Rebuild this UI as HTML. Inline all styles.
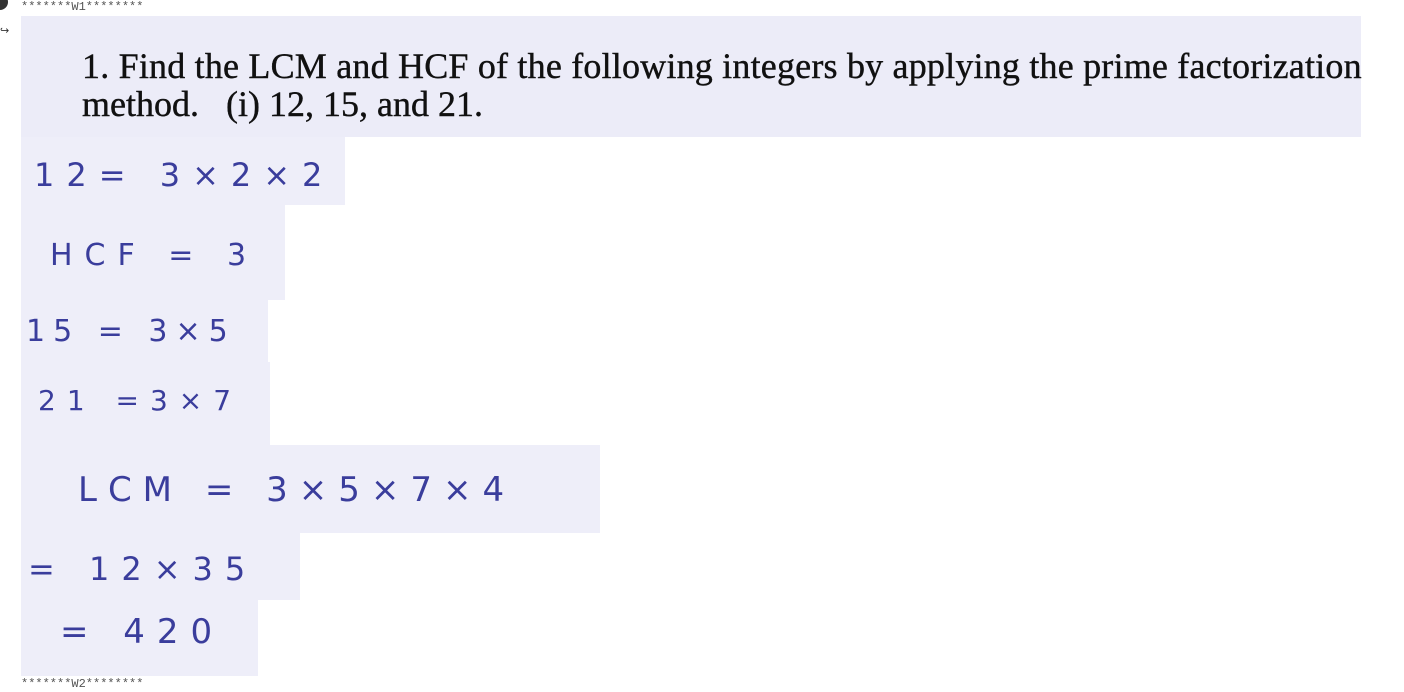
<!DOCTYPE html>
<html><head><meta charset="utf-8"><style>
body{margin:0;width:1404px;height:692px;background:#fff;position:relative;overflow:hidden;font-family:"Liberation Sans",sans-serif}
.b{position:absolute;left:21px;background:#eeeef9}
.h{position:absolute;color:#3a3d9c;font-family:"DejaVu Sans",sans-serif;font-weight:normal;white-space:nowrap}
.p{position:absolute;font-family:"Liberation Serif",serif;font-size:36px;color:#111;white-space:nowrap;-webkit-text-stroke:0.4px #111}
.st{position:absolute;left:21px;font-family:"Liberation Mono",monospace;font-size:12px;color:#555}
</style></head><body>
<div style="position:absolute;left:-8px;top:-6px;width:16px;height:16px;border-radius:50%;background:#333"></div>
<div style="position:absolute;left:0;top:24px;font-size:11px;color:#333">↪</div>
<div class="st" style="top:0px">*******W1********</div>
<div class="b" style="top:16px;width:1340px;height:121px;background:#ececf8"></div>
<div class="p" style="left:82px;top:45px;letter-spacing:0.2px">1. Find the LCM and HCF of the following integers by applying the prime factorization</div>
<div class="p" style="left:82px;top:83px">method.&nbsp;&nbsp;&nbsp;(i) 12, 15, and 21.</div>
<div class="b" style="top:137px;width:324px;height:68px"></div>
<div class="h" style="left:34px;top:156px;font-size:32px;letter-spacing:12px">12= 3×2×2</div>
<div class="b" style="top:205px;width:264px;height:95px"></div>
<div class="h" style="left:50px;top:238px;font-size:30px;letter-spacing:12px">HCF = 3</div>
<div class="b" style="top:300px;width:247px;height:62px"></div>
<div class="h" style="left:26px;top:314px;font-size:30px;letter-spacing:8px">15 = 3×5</div>
<div class="b" style="top:362px;width:249px;height:83px"></div>
<div class="h" style="left:38px;top:384px;font-size:28px;letter-spacing:11px">21 =3×7</div>
<div class="b" style="top:445px;width:579px;height:88px"></div>
<div class="h" style="left:78px;top:470px;font-size:34px;letter-spacing:11px">LCM = 3×5×7×4</div>
<div class="b" style="top:533px;width:279px;height:67px"></div>
<div class="h" style="left:28px;top:550px;font-size:32px;letter-spacing:12px">= 12×35</div>
<div class="b" style="top:600px;width:237px;height:76px"></div>
<div class="h" style="left:60px;top:612px;font-size:34px;letter-spacing:12px">= 420</div>
<div class="st" style="top:677px">*******W2********</div>
</body></html>
